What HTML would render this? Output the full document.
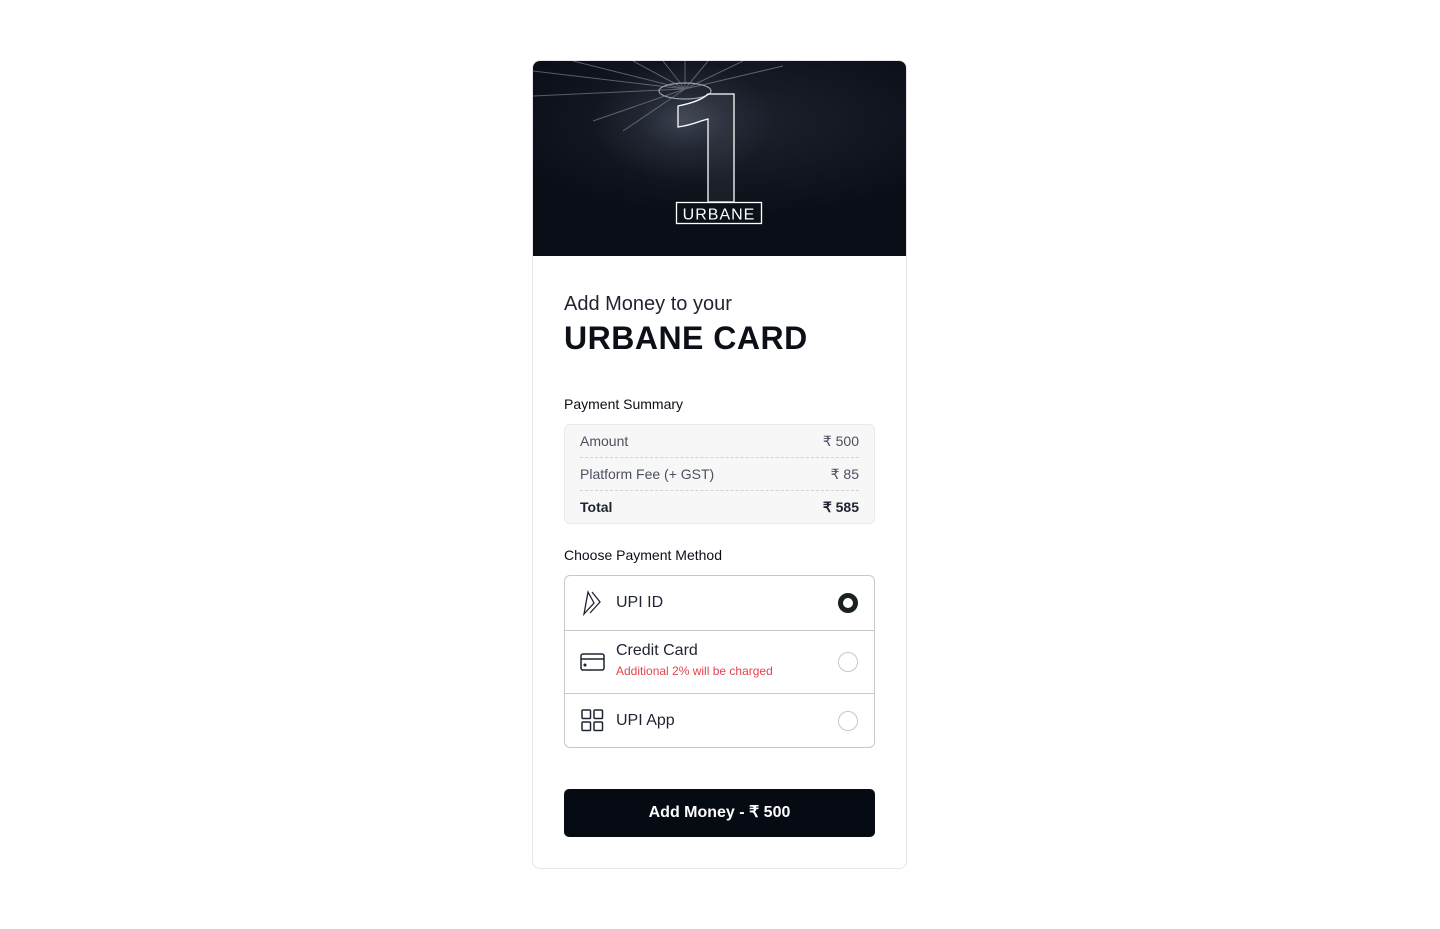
<!DOCTYPE html>
<html><head><style>
body{margin:0;background:#fff;font-family:"Liberation Sans",sans-serif;color:#0b0f17}
.card{position:absolute;left:532px;top:60px;width:373px;height:807px;border:1px solid #e5e7eb;border-radius:8px;overflow:hidden;background:#fff}
.hero{position:absolute;left:0;top:0;width:373px;height:195px;background:radial-gradient(ellipse 90px 60px at 150px 60px,#3b4150 0%,rgba(40,45,58,.6) 50%,transparent 100%),radial-gradient(ellipse 300px 120px at 200px 60px,#1d222d,#0a0e17 80%);}
.t1{position:absolute;left:31px;top:232px;font-size:20px;color:#1f2430}
.t2{position:absolute;left:31px;top:259px;font-size:32px;font-weight:bold;letter-spacing:.5px}
.lbl{position:absolute;left:31px;font-size:14px;color:#0b0f17}
.sum{position:absolute;left:31px;top:363px;width:309px;height:98px;background:#f7f7f8;border:1px solid #eaeaec;border-radius:6px}
.row{position:absolute;left:15px;right:15px;height:33px;line-height:33px;font-size:14px;color:#4b5060;display:flex;justify-content:space-between}
.row.d{border-bottom:1px dashed #cfd2d6;height:32px}
.row b{color:#1f2430}
.pm{position:absolute;left:31px;top:514px;width:309px;height:171px;border:1px solid #c6c8cc;border-radius:6px}
.opt{position:absolute;left:0;right:0;border-bottom:1px solid #c6c8cc}
.opt .n{position:absolute;left:51px;font-size:16px;color:#1f2430}
.rad{position:absolute;right:16px;width:20px;height:20px;border:1px solid #c6c8cc;border-radius:50%;box-sizing:border-box}
.btn{position:absolute;left:31px;top:728px;width:311px;height:48px;background:#060a12;border-radius:5px;color:#fff;font-weight:bold;font-size:16px;text-align:center;line-height:48px}
</style></head><body>
<div class="card">
<div class="hero">
<svg width="373" height="196" style="position:absolute;left:0;top:0">
<g stroke="#8a909c" stroke-width="1" opacity=".6">
<line x1="152" y1="28" x2="0" y2="10"/><line x1="152" y1="28" x2="40" y2="0"/><line x1="152" y1="28" x2="100" y2="0"/><line x1="152" y1="28" x2="130" y2="0"/><line x1="152" y1="28" x2="152" y2="0"/><line x1="152" y1="28" x2="175" y2="0"/><line x1="152" y1="28" x2="210" y2="0"/><line x1="152" y1="28" x2="250" y2="5"/><line x1="152" y1="28" x2="60" y2="60"/><line x1="152" y1="28" x2="90" y2="70"/><line x1="152" y1="28" x2="0" y2="35"/>
</g>
<ellipse cx="152" cy="30" rx="26" ry="8" fill="none" stroke="#9aa0aa" stroke-width="1.2"/>
<path d="M145 45 C160 42 170 38 175 33 L201 33 L201 141 L175 141 L175 58 L168 60 C160 63 152 65 145 66 Z" fill="rgba(255,255,255,.05)" stroke="#fff" stroke-width="1.3"/>
<rect x="143.5" y="141.5" width="85" height="21" fill="#0c1019" stroke="#fff" stroke-width="1.3"/>
<text x="186" y="158.5" text-anchor="middle" fill="#fff" font-family="Liberation Sans" font-size="16" letter-spacing="1">URBANE</text>
</svg>
</div>
<div class="t1">Add Money to your</div>
<div class="t2">URBANE CARD</div>
<div class="lbl" style="top:335px">Payment Summary</div>
<div class="sum">
<div class="row d" style="top:0"><span>Amount</span><span>₹ 500</span></div>
<div class="row d" style="top:33px"><span>Platform Fee (+ GST)</span><span>₹ 85</span></div>
<div class="row" style="top:66px"><b>Total</b><b>₹ 585</b></div>
</div>
<div class="lbl" style="top:486px">Choose Payment Method</div>
<div class="pm">
<div class="opt" style="top:0;height:54px">
<svg style="position:absolute;left:16px;top:14px" width="22" height="26" viewBox="0 0 22 26" fill="none" stroke="#1f2430" stroke-width="1.3"><path d="M7 2 L13 13 L3 24 Z"/><path d="M11 2 L19 12 L9 23"/></svg>
<div class="n" style="top:18px">UPI ID</div>
<div class="rad" style="top:17px;border:5px solid #1a2220;background:#fff"></div>
</div>
<div class="opt" style="top:55px;height:62px">
<svg style="position:absolute;left:15px;top:22px" width="25" height="18" viewBox="0 0 25 18" fill="none" stroke="#1f2430" stroke-width="1.5"><rect x="1" y="1" width="23" height="16" rx="2"/><line x1="1" y1="6" x2="24" y2="6"/><circle cx="5" cy="12" r=".8" fill="#1f2430"/></svg>
<div class="n" style="top:11px">Credit Card</div>
<div style="position:absolute;left:51px;top:33px;font-size:12px;color:#e5434f">Additional 2% will be charged</div>
<div class="rad" style="top:21px"></div>
</div>
<div class="opt" style="top:118px;height:53px;border:0">
<svg style="position:absolute;left:16px;top:15px" width="23" height="23" viewBox="0 0 23 23" fill="none" stroke="#1f2430" stroke-width="1.5"><rect x="1" y="1" width="8.5" height="8.5" rx="1"/><rect x="13" y="1" width="8.5" height="8.5" rx="1"/><rect x="1" y="13" width="8.5" height="8.5" rx="1"/><rect x="13" y="13" width="8.5" height="8.5" rx="1"/></svg>
<div class="n" style="top:18px">UPI App</div>
<div class="rad" style="top:17px"></div>
</div>
</div>
<div class="btn">Add Money - ₹ 500</div>
</div>
</body></html>
